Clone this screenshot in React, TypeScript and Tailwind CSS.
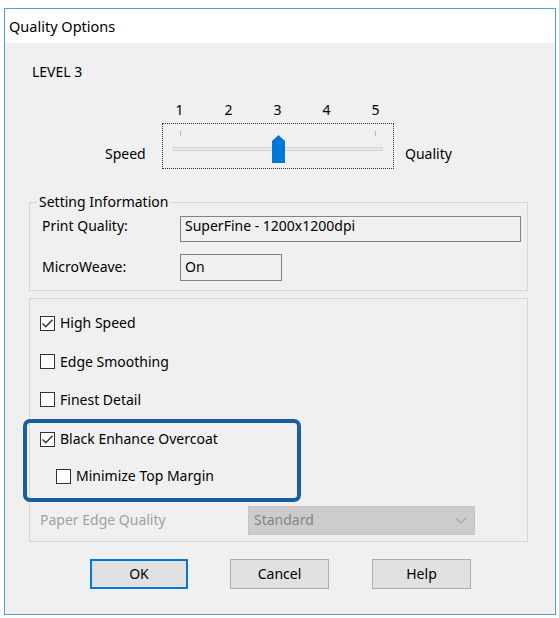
import type { ReactNode } from 'react'

// ─── Pieces ───────────────────────────────────────────────────────────────────

function Checkbox({ checked }: { checked?: boolean }) {
  return (
    <span className="flex h-[15px] w-[15px] shrink-0 items-center justify-center border border-[#333333] bg-white">
      {checked && (
        <svg width="13" height="13" viewBox="0 0 13 13" fill="none">
          <path d="M1.5 6.5 L4.8 9.8 L11.5 2.8" stroke="#333333" strokeWidth="1.4" />
        </svg>
      )}
    </span>
  )
}

function CheckRow({
  label,
  checked,
  className,
}: {
  label: string
  checked?: boolean
  className?: string
}) {
  return (
    <div className={`flex h-[18px] items-center ${className ?? ''}`}>
      <Checkbox checked={checked} />
      <span className="ml-[5px] whitespace-nowrap">{label}</span>
    </div>
  )
}

function Button({ children, primary }: { children: ReactNode; primary?: boolean }) {
  return (
    <div
      className={
        primary
          ? 'flex h-[30px] w-[98px] items-center justify-center border-2 border-[#0078d7] bg-[#e1e1e1]'
          : 'flex h-[30px] w-[99px] items-center justify-center border border-[#adadad] bg-[#e1e1e1]'
      }
    >
      {children}
    </div>
  )
}

// ─── Dialog ───────────────────────────────────────────────────────────────────

export default function App() {
  const numbers = ['1', '2', '3', '4', '5']

  return (
    <div
      className="h-[618px] w-[559px] bg-white pl-[4px] pt-[8px] text-[14px] leading-[18px] text-black"
      style={{ fontFamily: '"Noto Sans", "Open Sans", sans-serif' }}
    >
      <div className="flex h-[607px] w-[552px] flex-col border border-[#4c9ee3]">
        {/* title bar */}
        <div className="flex h-[34px] items-center bg-white pl-[4px] text-[14.5px]">
          Quality Options
        </div>

        {/* body */}
        <div className="flex-1 bg-[#f0f0f0]">
          <div className="ml-[27px] mt-[20px]">LEVEL 3</div>

          {/* slider */}
          <div className="ml-[150px] mt-[20px] flex">
            {numbers.map((n) => (
              <span key={n} className="w-[49px] text-center">
                {n}
              </span>
            ))}
          </div>
          <div className="mt-[4px] flex items-start">
            <span className="ml-[100px] mt-[22px] w-[57px]">Speed</span>
            <div className="relative h-[46px] w-[232px] border border-dotted border-[#333333]">
              <div className="flex justify-between pl-[17px] pr-[17px] pt-[7px]">
                <span className="h-[5px] w-px bg-[#b5b5b5]" />
                <span className="h-[5px] w-px bg-[#b5b5b5]" />
              </div>
              <div className="ml-[10px] mt-[11px] h-[4px] w-[210px] border border-[#d6d6d6] bg-[#e7e7e7]" />
              <svg
                className="absolute left-[109px] top-[11px]"
                width="13"
                height="28"
                viewBox="0 0 13 28"
              >
                <path d="M0 6 L6.5 0 L13 6 L13 28 L0 28 Z" fill="#0078d7" />
              </svg>
            </div>
            <span className="ml-[11px] mt-[22px]">Quality</span>
          </div>

          {/* setting information */}
          <fieldset className="ml-[24px] mt-[24px] w-[499px] border border-[#d8d8d8] pb-[9px]">
            <legend className="ml-[7px] px-[2px]">Setting Information</legend>
            <div className="mt-[5px] flex items-start">
              <span className="ml-[12px] mt-[1px] w-[138px]">Print Quality:</span>
              <div className="h-[26px] w-[341px] border border-[#838383] pl-[4px] pt-[0px]">
                SuperFine - 1200x1200dpi
              </div>
            </div>
            <div className="mt-[12px] flex items-start">
              <span className="ml-[12px] mt-[4px] w-[138px]">MicroWeave:</span>
              <div className="h-[27px] w-[102px] border border-[#838383] pl-[4px] pt-[3px]">
                On
              </div>
            </div>
          </fieldset>

          {/* options */}
          <div className="ml-[24px] mt-[7px] h-[244px] w-[499px] border border-[#d8d8d8]">
            <CheckRow label="High Speed" checked className="ml-[10px] mt-[15px]" />
            <CheckRow label="Edge Smoothing" className="ml-[10px] mt-[20.5px]" />
            <CheckRow label="Finest Detail" className="ml-[10px] mt-[20px]" />

            <div className="-ml-[7px] mt-[10px] h-[83px] w-[278px] rounded-[7px] border-4 border-[#17609f] pt-[7.5px]">
              <CheckRow label="Black Enhance Overcoat" checked className="ml-[13px]" />
              <CheckRow label="Minimize Top Margin" className="ml-[29px] mt-[19px]" />
            </div>

            <div className="mt-[4px] flex h-[29px] items-center">
              <span className="ml-[10px] w-[208px] text-[#a0a0a0]">Paper Edge Quality</span>
              <div className="flex h-[29px] w-[227px] items-center justify-between border border-[#c4c4c4] bg-[#cccccc] pl-[5px] pr-[7px] text-[#858585]">
                <span>Standard</span>
                <svg width="12" height="7" viewBox="0 0 12 7" fill="none">
                  <path d="M1 1 L6 6 L11 1" stroke="#a6a6a6" strokeWidth="1.2" />
                </svg>
              </div>
            </div>
          </div>

          {/* buttons */}
          <div className="ml-[85px] mt-[17px] flex gap-[42px]">
            <Button primary>OK</Button>
            <Button>Cancel</Button>
            <div className="ml-[1px]">
              <Button>Help</Button>
            </div>
          </div>
        </div>
      </div>
    </div>
  )
}
